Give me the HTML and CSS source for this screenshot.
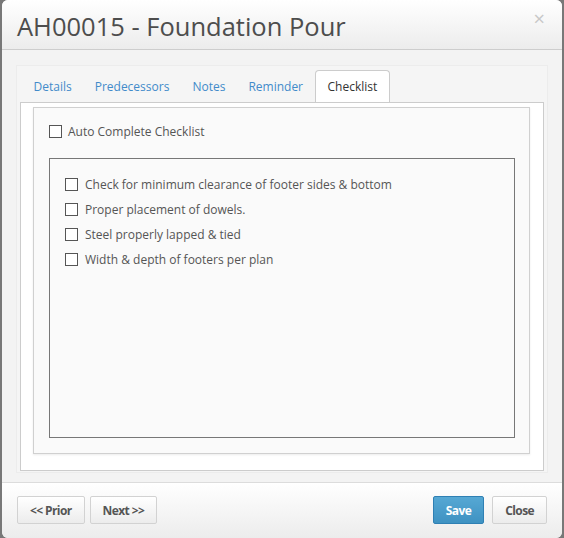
FILE: index.html
```html
<!DOCTYPE html>
<html lang="en">
<head>
  <meta charset="UTF-8">
  <meta name="viewport" content="width=device-width, initial-scale=1.0">
  <title>AH00015 - Foundation Pour</title>
  <link rel="stylesheet" href="styles.css">
</head>
<body>
  <div class="modal">
    <header class="modal-header">
      <h1>AH00015 - Foundation Pour</h1>
      <span class="close">&times;</span>
    </header>

    <main class="modal-body">
      <div class="panel">
        <ul class="tabs">
          <li><a href="#">Details</a></li>
          <li><a href="#">Predecessors</a></li>
          <li><a href="#">Notes</a></li>
          <li><a href="#">Reminder</a></li>
          <li class="active"><a href="#">Checklist</a></li>
        </ul>
        <div class="tab-content">
          <div class="checklist-pane">
            <label class="check auto">
              <input type="checkbox"> Auto Complete Checklist
            </label>
            <div class="checklist">
              <label class="check"><input type="checkbox"> Check for minimum clearance of footer sides &amp; bottom</label>
              <label class="check"><input type="checkbox"> Proper placement of dowels.</label>
              <label class="check"><input type="checkbox"> Steel properly lapped &amp; tied</label>
              <label class="check"><input type="checkbox"> Width &amp; depth of footers per plan</label>
            </div>
          </div>
        </div>
      </div>
    </main>

    <footer class="modal-footer">
      <div class="group">
        <button>&lt;&lt; Prior</button>
        <button>Next &gt;&gt;</button>
      </div>
      <div class="group wide">
        <button class="primary">Save</button>
        <button>Close</button>
      </div>
    </footer>
  </div>
</body>
</html>
```

FILE: styles.css
```css
body {
  font-family: "Open Sans", Arial, sans-serif;
  margin: 0;
  padding: 0;
  background-color: #787878;
  overflow: hidden;
}
.modal {
  margin: 0 2px;
  height: 538px;
  border-radius: 6px;
  background-color: #f3f3f3;
  overflow: hidden;
  display: flex;
  flex-direction: column;
}
.modal-header {
  height: 49px;
  border-bottom: 1px solid #cdcdcd;
  background: linear-gradient(#ffffff, #ececec);
  display: flex;
  align-items: center;
  justify-content: space-between;
  padding: 0 17px 0 15px;
}
.modal-header h1 {
  margin: 0;
  font-size: 25.5px;
  font-weight: 400;
  color: #4d4d4d;
  padding-top: 2px;
}
.close {
  color: #c8c8c8;
  font-size: 20px;
  line-height: 1;
  margin-bottom: 12px;
  cursor: pointer;
}
.modal-body {
  flex: 1;
  padding: 15px 14px 9px 14px;
}
.panel {
  height: 100%;
  box-sizing: border-box;
  background-color: #f5f5f5;
  border: 1px solid #ececec;
  padding: 4px 3px 1px 3px;
  display: flex;
  flex-direction: column;
}
.tabs {
  list-style: none;
  margin: 0 0 -1px 0;
  padding: 0 0 0 2px;
  display: flex;
  font-size: 12px;
}
.tabs a {
  display: block;
  padding: 0 10.5px;
  line-height: 32px;
  height: 32px;
  border: 1px solid transparent;
  border-bottom: none;
  border-radius: 4px 4px 0 0;
  color: #428bca;
  text-decoration: none;
}
.tabs .active a {
  background-color: #fff;
  border-color: #ccc;
  color: #333;
  padding: 0 12px;
}
.tab-content {
  flex: 1;
  background-color: #fff;
  border: 1px solid #ccc;
  padding: 4px 13px 16px 12px;
}
.checklist-pane {
  height: 100%;
  box-sizing: border-box;
  background-color: #fafafa;
  border: 1px solid #d0d0d0;
  box-shadow: 0 1px 2px rgba(0, 0, 0, 0.08);
  padding: 17px 14px 15px 15px;
  display: flex;
  flex-direction: column;
}
.check {
  display: flex;
  align-items: center;
  gap: 7px;
  font-size: 12px;
  color: #555;
  height: 13px;
}
.check input {
  appearance: none;
  margin: 0;
  width: 13px;
  height: 13px;
  border: 1px solid #555;
  background-color: #fff;
}
.auto {
  gap: 6px;
}
.checklist {
  flex: 1;
  margin-top: 20px;
  border: 1px solid #777;
  background-color: #fafafa;
  padding: 19px 15px;
  display: flex;
  flex-direction: column;
  gap: 12px;
}
.modal-footer {
  height: 56px;
  box-sizing: border-box;
  border-top: 1px solid #dcdcdc;
  background: linear-gradient(#ffffff, #ececec);
  padding: 13px 15px 0 15px;
  display: flex;
  justify-content: space-between;
  align-items: flex-start;
}
.group {
  display: flex;
  gap: 5px;
}
.group.wide {
  gap: 8px;
}
button {
  font-family: "Open Sans", Arial, sans-serif;
  font-size: 12px;
  font-weight: 700;
  letter-spacing: -0.6px;
  color: #555;
  height: 28px;
  padding: 0 12px;
  border: 1px solid #d2d2d2;
  border-radius: 2px;
  background: linear-gradient(#ffffff, #ececec);
  cursor: pointer;
}
button.primary {
  color: #fff;
  border-color: #2f80b4;
  background: linear-gradient(#56a8d4, #3f92c2);
}
```
